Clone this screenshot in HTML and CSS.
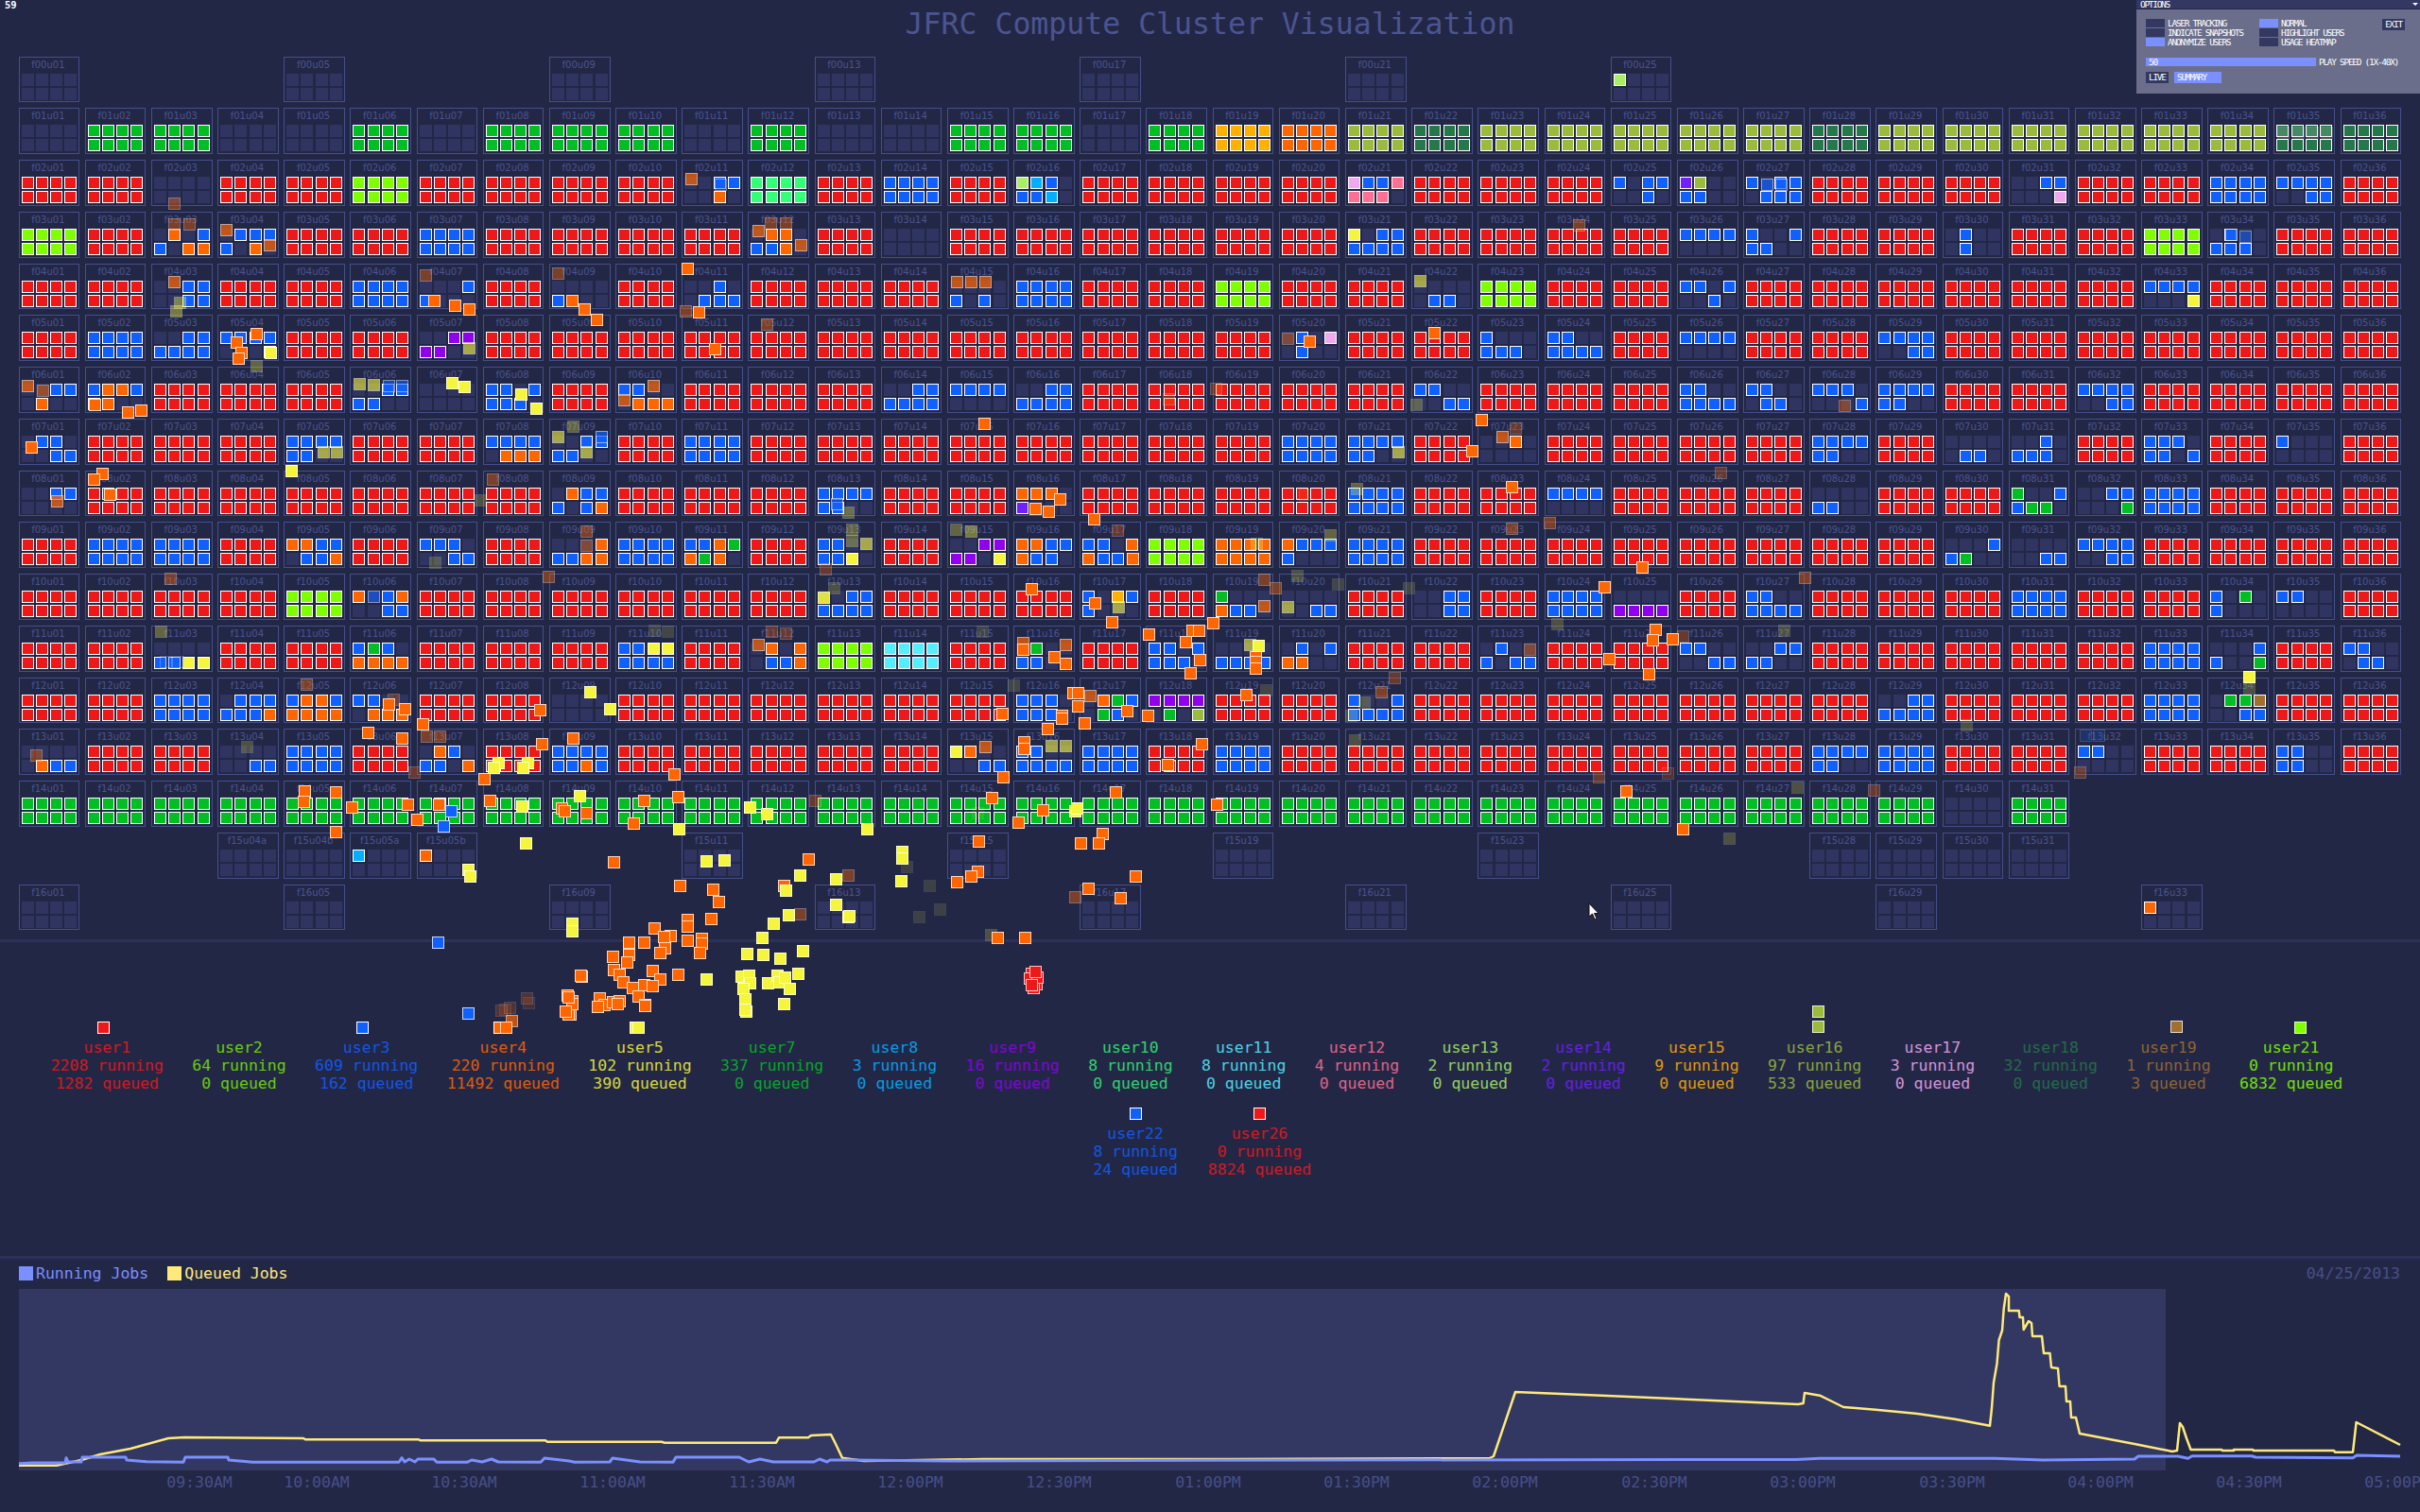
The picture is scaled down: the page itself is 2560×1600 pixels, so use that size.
FILE: index.html
```html
<!DOCTYPE html>
<html lang="en">
<head>
    <meta charset="UTF-8">
    <title>JFRC Compute Cluster Visualization</title>
    <link rel="stylesheet" href="styles.css">
</head>
<body>

    <div class="fps">59</div>

    <h1 class="title">JFRC Compute Cluster Visualization</h1>

    <!-- racks are built in script.js -->
    <div id="racks" class="racks"></div>

    <div class="divider"></div>

    <div id="users" class="users"></div>

    <div class="divider"></div>

    <div class="footer">
        <div class="chart-head">
            <span class="swatch swatch-running"></span>
            <span class="key key-running">Running Jobs</span>
            <span class="swatch swatch-queued"></span>
            <span class="key key-queued">Queued Jobs</span>
            <span class="date">04/25/2013</span>
        </div>
        <svg class="chart" viewBox="0 1360 2560 240" width="2560" height="240">
            <rect class="plot" x="20" y="1364" width="2271" height="192"></rect>
            <polyline class="line-queued" points="20,1550.7 60,1550.7 86,1545 106,1539 138,1533 178,1522 195,1521 321,1522 323,1523.3 443,1523.3 445,1524.3 577,1524.3 579,1525.7 700,1525.7 703,1526.7 821,1526.7 824,1521.3 855,1521.3 858,1519 879,1518 884,1528 891,1542.7 900,1544 914,1546 1040,1544 1300,1544 1576,1543 1580,1541 1603,1473 1700,1477 1902,1486 1907.6,1485 1909,1474 1925,1476.7 1938,1483 1950,1489 1963,1490 1984,1491.7 2026,1495.7 2068,1501.7 2105,1508.7 2107,1490 2109,1463 2112.5,1443 2114.6,1418 2118,1408 2119.7,1385 2122,1369 2125,1372 2125,1387 2135.7,1387 2136.5,1394 2140,1394 2140.7,1407 2146,1398 2149,1400 2150,1414 2160,1414 2162,1432 2168.5,1432 2170,1447 2177,1448 2178.6,1467 2185,1467 2186,1483 2190,1483 2191,1500 2196,1500 2200,1517 2258,1528 2298,1536 2303,1535 2306,1506 2309,1510 2313,1522 2317.5,1534 2350,1534 2351,1535 2363,1535 2363,1534 2383,1534 2384,1535 2469,1535 2470,1536.7 2489,1536.7 2492.6,1505 2539,1529"></polyline>
            <polyline class="line-running" points="20,1548.7 34,1548 69,1548 70,1542.7 72,1547 86,1547 87,1542 133,1542 134,1545 155,1546.7 194,1547.3 196,1542 241,1542 242,1545 267,1547.3 422,1547.3 425,1542.7 428,1547 433,1544 439,1547 442,1544 459,1544 462,1547.3 494,1547.3 499,1545 510,1547 520,1544 527,1547 572,1547.3 576,1543 602,1546 608,1547.3 645,1547 648,1543 677,1547 712,1547.3 715,1542 782,1542 792,1547 804,1544 818,1547 861,1547 867,1544 875,1547 878,1545 900,1545 1000,1546 1400,1545 1900,1544.5 1925,1543.3 2110,1543.3 2161,1545 2258,1544 2262,1541 2304,1541 2314.6,1543.3 2319,1540.7 2382,1540.7 2386,1542 2489,1542.7 2493,1540 2539,1541"></polyline>
            <text class="tick" x="211" y="1574">09:30AM</text>
            <text class="tick" x="335" y="1574">10:00AM</text>
            <text class="tick" x="491" y="1574">10:30AM</text>
            <text class="tick" x="648" y="1574">11:00AM</text>
            <text class="tick" x="806" y="1574">11:30AM</text>
            <text class="tick" x="963" y="1574">12:00PM</text>
            <text class="tick" x="1120" y="1574">12:30PM</text>
            <text class="tick" x="1278" y="1574">01:00PM</text>
            <text class="tick" x="1435" y="1574">01:30PM</text>
            <text class="tick" x="1592" y="1574">02:00PM</text>
            <text class="tick" x="1750" y="1574">02:30PM</text>
            <text class="tick" x="1907" y="1574">03:00PM</text>
            <text class="tick" x="2065" y="1574">03:30PM</text>
            <text class="tick" x="2222" y="1574">04:00PM</text>
            <text class="tick" x="2379" y="1574">04:30PM</text>
            <text class="tick" x="2536" y="1574">05:00PM</text>
        </svg>
    </div>

    <!-- jobs flying between the racks and the user list -->
    <div id="jobs" class="jobs"></div>

    <div class="options">
        <div class="options-bar">
            <span>OPTIONS</span>
            <span class="options-arrow"></span>
        </div>
        <div class="options-body">
            <div class="options-top">
                <div class="option-col">
                    <div class="option"><span class="box"></span>LASER TRACKING</div>
                    <div class="option"><span class="box"></span>INDICATE SNAPSHOTS</div>
                    <div class="option"><span class="box box-on"></span>ANONYMIZE USERS</div>
                </div>
                <div class="option-col">
                    <div class="option"><span class="box box-on"></span>NORMAL</div>
                    <div class="option"><span class="box"></span>HIGHLIGHT USERS</div>
                    <div class="option"><span class="box"></span>USAGE HEATMAP</div>
                </div>
                <div class="exit">EXIT</div>
            </div>
            <div class="speed">
                <div class="speed-bar">50</div>
                <span>PLAY SPEED (1X-40X)</span>
            </div>
            <div class="buttons">
                <div class="btn-live">LIVE</div>
                <div class="btn-summary">SUMMARY</div>
            </div>
        </div>
    </div>

    <svg class="cursor" width="12" height="19" viewBox="0 0 12 19">
        <path d="M1 1 L1 15 L4.5 12 L7 18 L9 17 L6.5 11.5 L11 11.5 Z" fill="#fff" stroke="#111" stroke-width="1"></path>
    </svg>

    <script src="script.js"></script>
</body>
</html>
```

FILE: styles.css
```css
body {
    font-family: "DejaVu Sans Mono", monospace;
    background-color: #232746;
    color: #465088;
    margin: 0;
    width: 2560px;
    height: 1600px;
    overflow: hidden;
    position: relative;
}

.fps {
    position: absolute;
    left: 5px;
    top: 0;
    font-size: 10.5px;
    line-height: 10px;
    font-weight: bold;
    color: #fff;
}

.title {
    margin: 0;
    height: 59.6px;
    line-height: 50px;
    font-size: 31.5px;
    font-weight: normal;
    text-align: center;
    color: #4a5592;
}

/* racks */
.racks {
    display: grid;
    grid-template-columns: repeat(36, 64.68px);
    grid-auto-rows: 48.75px;
    column-gap: 5.5px;
    row-gap: 6px;
    margin-left: 19.55px;
    height: 934.4px;
}
.rack {
    box-sizing: border-box;
    border: 1px solid #444f8a;
    padding: 0 2px;
    display: flex;
    flex-direction: column;
    align-items: center;
}
.rack-name {
    font-family: "DejaVu Sans", sans-serif;
    font-size: 10px;
    line-height: 15px;
    height: 17px;
    margin-left: -2px;
    white-space: nowrap;
    color: #4a5490;
}
.slots {
    display: grid;
    width: 100%;
    grid-template-columns: repeat(4, 13px);
    grid-auto-rows: 13px;
    justify-content: space-between;
    row-gap: 2px;
}
.slot {
    box-sizing: border-box;
    background-color: #2f3560;
}
.slot.on {
    border: 1px solid #fff;
}
.r { background-color: #ee1818; }
.g { background-color: #00be23; }
.b { background-color: #1060ff; }
.l { background-color: #80ff00; }
.o { background-color: #ff6600; }
.y { background-color: #f5f53c; }
.a { background-color: #ffb000; }
.O { background-color: #9bbb3c; }
.d { background-color: #25784a; }
.p { background-color: #9000ee; }
.v { background-color: #7020ff; }
.c { background-color: #00b0ff; }
.C { background-color: #55eeff; }
.m { background-color: #33ff77; }
.i { background-color: #f0a8f0; }
.k { background-color: #ff6f94; }
.n { background-color: #a8ee66; }
.w { background-color: #a07030; }
.t { background-color: #cccccc; }

.divider {
    height: 3px;
    background-color: #2c3159;
}

/* user list */
.users {
    box-sizing: border-box;
    height: 332px;
    padding: 84px 28px 0 0;
    display: flex;
    flex-direction: column;
    gap: 16px;
}
.user-row {
    display: flex;
    justify-content: center;
    column-gap: 30.4px;
}
.user-row + .user-row {
    padding-left: 11.5px;
    column-gap: 32px;
}
.user-row + .user-row .marker {
    margin-right: 0;
}
.user {
    display: flex;
    flex-direction: column;
    align-items: center;
    font-size: 16.5px;
    line-height: 19px;
    white-space: nowrap;
}
.user-text {
    display: flex;
    flex-direction: column;
    align-items: center;
    opacity: 0.85;
}
.marker {
    box-sizing: border-box;
    width: 13px;
    height: 13px;
    margin: 0 8px 5px 0;
    border: 1px solid #fff;
}
.marker.gone {
    visibility: hidden;
}

/* chart */
.footer {
    padding-top: 8px;
}
.chart-head {
    display: flex;
    align-items: center;
    height: 16px;
    margin: 0 21px 4px 20px;
    font-size: 16.5px;
}
.swatch {
    width: 15px;
    height: 15px;
    margin-right: 3px;
}
.swatch-running { background-color: #7b90ff; }
.swatch-queued { background-color: #ffe97a; }
.key {
    margin-right: 20px;
}
.key-running { color: #7b90ff; }
.key-queued { color: #ffe97a; }
.date {
    margin-left: auto;
}
.chart {
    display: block;
}
.plot {
    fill: #323862;
}
.line-queued, .line-running {
    fill: none;
    stroke-linejoin: round;
}
.line-queued {
    stroke: #ffe97a;
    stroke-width: 2.5;
}
.line-running {
    stroke: #7b90ff;
    stroke-width: 3;
}
.tick {
    fill: #465088;
    font-size: 16.5px;
    text-anchor: middle;
}

/* flying jobs */
.jobs {
    position: absolute;
    left: 0;
    top: 0;
}
.job {
    position: absolute;
    box-sizing: border-box;
    width: 13px;
    height: 13px;
    border: 1px solid rgba(255, 255, 255, 0.75);
}

/* options panel */
.options {
    position: absolute;
    top: 0;
    right: 0;
    width: 300px;
    color: #fff;
    font-size: 9.5px;
    letter-spacing: -1.3px;
    line-height: 9px;
}
.options-bar {
    display: flex;
    justify-content: space-between;
    align-items: center;
    height: 9px;
    padding: 0 2px 0 4px;
    background-color: #323862;
    border-bottom: 1px solid #232746;
}
.options-arrow {
    width: 0;
    height: 0;
    border-left: 3px solid transparent;
    border-right: 3px solid transparent;
    border-top: 3px solid #fff;
}
.options-body {
    box-sizing: border-box;
    height: 89px;
    padding: 10px 10px 0;
    background-color: #6b6e8a;
}
.options-top {
    display: flex;
    height: 30px;
    margin-bottom: 11px;
}
.option-col {
    width: 120px;
    display: flex;
    flex-direction: column;
    gap: 1px;
}
.exit {
    margin-left: 10px;
    width: 24px;
    height: 12px;
    line-height: 12px;
    text-align: center;
    background-color: #323862;
}
.option {
    display: flex;
    align-items: center;
    height: 9px;
}
.box {
    width: 20px;
    height: 9px;
    margin-right: 3px;
    background-color: #323862;
}
.box-on {
    background-color: #7b90ff;
}
.speed {
    display: flex;
    align-items: center;
    gap: 3px;
    margin-bottom: 6px;
}
.speed-bar {
    box-sizing: border-box;
    width: 180px;
    height: 9px;
    padding-left: 3px;
    background-color: #7b90ff;
}
.buttons {
    display: flex;
    gap: 6px;
}
.btn-live, .btn-summary {
    box-sizing: border-box;
    height: 12px;
    line-height: 12px;
    padding-left: 3px;
}
.btn-live {
    width: 24px;
    background-color: #323862;
}
.btn-summary {
    width: 50px;
    background-color: #7b90ff;
}

.cursor {
    position: absolute;
    left: 1680px;
    top: 955px;
}
```

FILE: script.js
```js
// One string per row (f00 to f16), 36 racks each.
// "-" no rack, "." empty rack, one letter = the whole rack that colour, 8 letters = each slot.
const rackRows = [
    ". - - - . - - - . - - - . - - - . - - - . - - - n....... - - - - - - - - - - -",
    ". g g . . g . g g g . g . . g g . g a o O d O O O O O d O O O O O O d d",
    "r r . r r l r r r r ..bb..o. m r b r ncb.bbc. r r r r ibbkkkk. r r r b.bb..b. vO..bb.. b.bb.bbb r r r ..bb...i r r b bbbb..bb r",
    "l r .o.bb.oo .bbbb.o. r r b r r r r .oo.bbo. r . r r r r r r y.bbbbbb r r r r bbbb.... b..bbb.. r r .b...b.. r r l .b..bbb. r r",
    "r r ..bb..bb r r b ...bb... r ....b... r ..b..bbb r r r ....b.b. b r r l r r .....bb. l r r bb.b..b. r r r r r r bbbb...y r r r",
    "r b ..bbbbbb bbbb...y r r ..pppp.. r r r r r r r r r r r r .b.i.b.. r r b...bbb. bb..bbbb r bbbb.... r r bbbb..bb r r r r r r r",
    "..bb.o.. booboo.. r r r ..bbbb.. . bb.bbbb. r bb...ooo r r r ..bbbbbb bbbb.... ..bbbbbb r r r r r bb....bb r r r bb..bbbb bb...bb. bbb....b bbbbbb.. r r bbbb..bb r r r r",
    ".bb...bb r r r bbbbbb.. r r bbbb.ooo ..bbbb.. r b r r r r r r r r b bbbbbb.. r ..o..... r r r r bbbbbb.. r .....bb. ..b.bbb. r bbb.bb.b r b....... r",
    "..bb.... r r r r r r r .obbb.bo r r r bbbbbb.. r r ooo.v... r r r r b r r bbbb.... r r r ....bb.. r r g..bbgg. ..bb...g b r r r",
    "r b b r oobb.bbo r bbb...bb r ...obboo b bbogogo. r bb..bby. r ..pppp.y oobbobb. bb.oobb. l o obbbb... b r r r r r r r r ...bbg.. ......bb bbbb..bb r r r r",
    "r r r r l o.bo..bb r r r r r r ..bbbbbb r r r b.abb... r g...obb. ......bb r ..bb..bb r b ....pppp r bb..bbbb r r r b r r b.g.b... bb...... r",
    "r r ....bbyy r r bgb.oooo r r r bbyybbbb r .o.o.bbo l C r .g..bb.. r bb.bbbb. ....bbbb .b.boo.. r r .b..b.bb r r bb....bb ..bbbb.. r r r r r b ...bb..g r bb...bb.",
    "r r b .bbbbbbo booboooo bb...ooo r r . r r r r r r bbb.bbb. .ogb.gb. pppp.g.O r r b..bbbbb r r r r r r r ..bbbbbb r r r b .ggw..bb r r",
    ".....obb r r ......bb b r .ob.bb.o r bbbbbbob r r r r r yo....bb bb..bbbb b r b r r r r r r r r bbbbbb.. b r r bb...... r r bb..bb.. r",
    "g g g g g g g g g g g g g g g g g g g g g g g g g g g g g . g - - - - -",
    "- - - . . c....... o....... - - - . - - - . - - - . - - - . - - - - . . . . - - - - -",
    ". - - - . - - - . - - - . - - - . - - - . - - - . - - - . - - - o....... - - -"
];

// the half racks in row f15 have a letter in their name
const rackNames = { "15-4": "f15u04a", "15-5": "f15u04b", "15-6": "f15u05a", "15-7": "f15u05b" };

const users = [
    ["user1", "r", 2208, 1282, true, "#ee1818"],
    ["user2", "l", 64, 0, false, "#74e800"],
    ["user3", "b", 609, 162, true, "#1060ff"],
    ["user4", "o", 220, 11492, true, "#ff6600"],
    ["user5", "y", 102, 390, true, "#f5f53c"],
    ["user7", "g", 337, 0, false, "#00be23"],
    ["user8", "c", 3, 0, false, "#00b0ff"],
    ["user9", "p", 16, 0, false, "#9000ee"],
    ["user10", "m", 8, 0, false, "#33ee77"],
    ["user11", "C", 8, 0, false, "#55eeff"],
    ["user12", "k", 4, 0, false, "#ff6f94"],
    ["user13", "n", 2, 0, false, "#a8ee66"],
    ["user14", "v", 2, 0, false, "#7020ff"],
    ["user15", "a", 9, 0, false, "#ffb000"],
    ["user16", "O", 97, 533, false, "#9bbb3c"],
    ["user17", "i", 3, 0, false, "#f0a8f0"],
    ["user18", "d", 32, 0, false, "#25784a"],
    ["user19", "w", 1, 3, false, "#a07030"],
    ["user21", "l", 0, 6832, false, "#80ff00"],
    ["user22", "b", 8, 24, true, "#1060ff"],
    ["user26", "r", 0, 8824, true, "#ee1818"]
];

// job centres, solid
const flying = {
    o: [[271,353],[250,362],[255,373],[252,379],[100,428],[135,436],[149,434],[459,318],[481,323],[496,327],[605,318],[618,327],[631,338],[739,330],[727,284],
        [756,369],[33,473],[1041,448],[108,501],[99,507],[116,523],[1121,528],[1095,538],[1109,541],[1157,549],[1198,591],[1091,623],[1158,638],[1176,658],
        [1082,687],[1115,695],[1127,702],[1215,671],[1254,679],[1261,667],[1268,667],[1269,698],[1259,712],[411,745],[428,750],[447,766],[571,751],[1060,755],
        [1135,733],[1140,733],[1140,747],[1123,757],[1123,760],[1147,765],[1192,752],[1214,757],[1108,771],[389,775],[425,781],[573,787],[606,781],[512,824],
        [713,819],[1083,785],[1083,792],[1061,822],[1235,809],[1271,787],[322,837],[321,848],[355,838],[372,854],[431,851],[441,867],[355,880],[464,851],
        [518,847],[594,855],[597,858],[620,860],[670,871],[681,847],[717,843],[1049,844],[1103,857],[1077,870],[1180,838],[1166,882],[1143,892],[1162,892],
        [1035,890],[649,912],[855,909],[719,937],[754,941],[760,954],[829,937],[1034,922],[1027,927],[1012,933],[752,972],[727,973],[727,980],[692,982],
        [1151,940],[1185,950],[1201,927],[1055,992],[1084,992],[665,997],[681,997],[665,1010],[709,990],[702,991],[703,1003],[698,1008],[727,995],[742,993],
        [742,998],[740,1008],[663,1018],[615,1033],[649,1026],[655,1031],[659,1039],[690,1027],[698,1036],[717,1031],[669,1045],[681,1042],[690,1043],
        [675,1054],[682,1063],[634,1056],[639,1063],[605,1059],[648,1060],[655,1059],[603,1073],[600,1053],[601,1073],[605,1062],[632,1065],[653,1062],
        [682,1064],[535,1087],[614,1032],[648,1012],[601,1055],[598,1070],[1599,515],[1737,600],[1697,621],[1283,659],[1328,695],[1328,700],[1328,707],
        [1751,666],[1748,677],[1769,676],[1702,697],[1744,713],[1318,735],[1287,851],[1720,837],[1780,877],[1567,444],[1557,477],[1517,352],[1385,361]],
    y: [[478,405],[491,409],[551,417],[567,432],[308,498],[286,373],[624,732],[645,750],[527,807],[558,807],[522,812],[553,812],[613,842],[552,853],[793,854],
        [811,861],[718,877],[917,877],[1137,858],[1139,855],[556,892],[495,920],[497,927],[747,911],[766,910],[954,901],[954,908],[846,926],[884,930],[953,932],
        [831,942],[818,977],[834,968],[884,957],[897,970],[898,969],[605,977],[605,985],[806,992],[790,1009],[807,1010],[825,1014],[849,1006],[784,1033],
        [792,1032],[793,1040],[786,1046],[788,1057],[789,1070],[812,1040],[822,1032],[824,1039],[830,1034],[835,1046],[844,1030],[829,1062],[747,1036],
        [675,1087],[788,1068],[1331,683],[2379,716]],
    b: [[477,858],[469,874],[463,997],[495,1072]],
    r: [[1093,1032],[1091,1030],[1094,1037],[1096,1041],[1093,1045],[1089,1035],[1097,1034],[1091,1042],[1095,1028]],
    O: [[1923,1070],[1923,1086]],
    w: [[2302,1086]],
    l: [[2433,1087]]
};

// job centres, fading: x, y, colour, opacity
const fading = [
    [184,215,"o",.4],[184,237,"o",.4],[200,237,"o",.4],[239,243,"o",.7],[285,259,"o",.7],[731,189,"o",.7],[762,195,"b",.5],[815,236,"o",.4],[831,236,"o",.4],
    [802,244,"o",.7],[847,259,"o",.7],[184,298,"o",.7],[190,320,"y",.4],[186,329,"y",.4],[450,291,"o",.4],[590,289,"o",.4],[725,329,"o",.4],[1012,298,"o",.7],
    [1027,298,"o",.7],[1042,298,"o",.7],[271,387,"y",.3],[496,368,"y",.6],[811,343,"o",.4],[29,408,"o",.7],[45,413,"o",.5],[380,406,"y",.6],[395,407,"y",.6],
    [411,408,"b",.6],[425,408,"b",.6],[691,408,"o",.7],[660,423,"o",.7],[1236,422,"o",.3],[590,462,"y",.6],[606,451,"y",.3],[620,478,"y",.6],[342,478,"y",.6],
    [356,478,"y",.6],[636,462,"b",.7],[60,530,"o",.7],[521,507,"o",.4],[508,529,"y",.2],[897,542,"y",.3],[885,533,"b",.7],[901,560,"y",.3],[901,572,"y",.3],
    [916,575,"y",.6],[1011,560,"y",.3],[1027,562,"y",.4],[620,562,"o",.4],[620,577,"o",.4],[1182,561,"o",.3],[460,595,"y",.2],[873,602,"o",.3],[180,612,"o",.4],
    [580,610,"o",.4],[1183,642,"y",.6],[871,632,"y",.9],[882,622,"y",.2],[395,631,"b",.6],[170,668,"y",.3],[175,700,"b",.3],[188,700,"b",.3],[706,668,"y",.15],
    [692,667,"y",.15],[802,682,"o",.7],[816,668,"o",.3],[831,670,"o",.3],[1082,680,"o",.7],[1127,682,"o",.7],[1039,668,"y",.15],[324,724,"o",.4],[1153,736,"o",.7],
    [416,740,"o",.3],[1072,725,"y",.15],[451,779,"o",.4],[465,779,"o",.4],[38,799,"o",.4],[261,790,"y",.2],[438,817,"o",.3],[1042,790,"o",.7],[1112,789,"y",.6],
    [1127,789,"y",.6],[862,847,"o",.3],[1034,860,"y",.1],[897,926,"o",.4],[959,917,"y",.12],[983,937,"y",.12],[994,962,"y",.12],[972,970,"y",.12],[846,967,"o",.4],
    [1137,949,"o",.4],[1048,989,"y",.2],[541,1080,"o",.7],[534,1068,"o",.15],[530,1069,"o",.2],[559,1061,"o",.15],[557,1056,"o",.2],[539,1066,"o",.2],
    [1599,559,"o",.4],[1639,553,"o",.4],[1820,500,"o",.3],[1435,517,"y",.3],[1380,523,"o",.2],[1407,566,"y",.3],[1329,575,"y",.3],[1337,613,"o",.4],[1349,622,"o",.4],
    [1372,609,"y",.2],[1415,618,"y",.15],[1490,622,"y",.15],[1337,641,"o",.7],[1362,642,"y",.6],[1909,611,"o",.4],[1322,682,"y",.6],[1780,673,"o",.3],[1618,687,"o",.4],
    [1887,667,"y",.2],[1647,660,"y",.2],[1461,732,"o",.4],[1475,717,"o",.3],[1443,743,"y",.2],[1429,757,"y",.2],[1339,730,"y",.15],[1433,783,"y",.2],[2080,767,"y",.2],
    [2200,817,"o",.3],[1691,822,"o",.3],[1764,818,"o",.2],[2206,778,"b",.2],[2220,778,"b",.2],[1829,887,"y",.2],[1901,833,"y",.2],[1982,836,"o",.3],[1286,411,"o",.3],
    [1603,453,"o",.3],[1589,462,"o",.7],[1362,358,"o",.4],[1479,478,"y",.6],[1502,297,"y",.6],[1670,238,"o",.4],[1498,428,"y",.25],[1951,429,"o",.4],[1869,195,"b",.7],
    [1884,195,"b",.7],[2360,248,"b",.7],[2375,250,"b",.5],[2415,140,"t",.2],[2431,140,"t",.2],[2446,140,"t",.2],[2461,140,"t",.2],[2379,728,"y",.2]
];

function pad(n) {
    return n < 10 ? "0" + n : "" + n;
}

function addSlots(rack, token) {
    const slots = document.createElement("div");
    slots.className = "slots";
    for (let i = 0; i < 8; i++) {
        const c = token.length === 1 ? token : token[i];
        const slot = document.createElement("div");
        slot.className = c === "." ? "slot" : "slot on " + c;
        slots.appendChild(slot);
    }
    rack.appendChild(slots);
}

function buildRacks() {
    const box = document.getElementById("racks");
    rackRows.forEach((row, r) => {
        row.split(" ").forEach((token, i) => {
            const cell = document.createElement("div");
            if (token !== "-") {
                const col = i + 1;
                cell.className = "rack";
                const name = document.createElement("div");
                name.className = "rack-name";
                name.textContent = rackNames[r + "-" + col] || "f" + pad(r) + "u" + pad(col);
                cell.appendChild(name);
                addSlots(cell, token);
            }
            box.appendChild(cell);
        });
    });
}

function addLine(parent, text) {
    const line = document.createElement("div");
    line.textContent = text;
    parent.appendChild(line);
}

function buildUsers() {
    const box = document.getElementById("users");
    // first row is user1 to user21, the last two wrap under it
    [users.slice(0, 19), users.slice(19)].forEach(list => {
        const row = document.createElement("div");
        row.className = "user-row";
        list.forEach(u => {
            const el = document.createElement("div");
            el.className = "user";
            el.style.color = u[5];
            const marker = document.createElement("div");
            marker.className = "marker " + u[1] + (u[4] ? "" : " gone");
            el.appendChild(marker);
            const text = document.createElement("div");
            text.className = "user-text";
            addLine(text, u[0]);
            addLine(text, u[2] + " running");
            addLine(text, u[3] + " queued");
            el.appendChild(text);
            row.appendChild(el);
        });
        box.appendChild(row);
    });
}

function addJob(box, x, y, colour, alpha) {
    const job = document.createElement("div");
    job.className = "job " + colour;
    job.style.left = (x - 6.5) + "px";
    job.style.top = (y - 6.5) + "px";
    if (alpha) job.style.opacity = alpha;
    box.appendChild(job);
}

function buildJobs() {
    const box = document.getElementById("jobs");
    fading.forEach(j => addJob(box, j[0], j[1], j[2], j[3]));
    Object.keys(flying).forEach(colour => {
        flying[colour].forEach(j => addJob(box, j[0], j[1], colour));
    });
}

buildRacks();
buildUsers();
buildJobs();
```
